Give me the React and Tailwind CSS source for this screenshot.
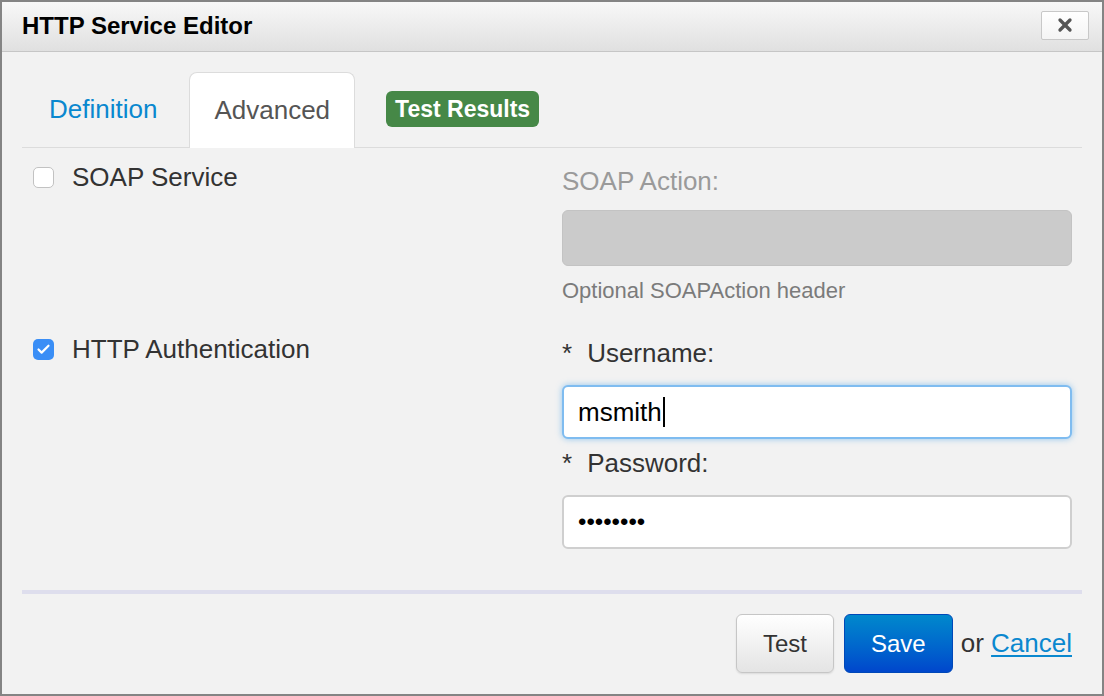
import { X, Check } from "lucide-react";

const Checkbox = ({ checked }) =>
  checked ? (
    <span className="flex items-center justify-center w-[21px] h-[21px] rounded-[5px] bg-[#3a8ef6]">
      <Check className="w-[15px] h-[15px] text-white" strokeWidth={3.5} />
    </span>
  ) : (
    <span className="block w-[21px] h-[21px] rounded-[5px] bg-white border border-[#c2c2c2]" />
  );

export default function App() {
  return (
    <div className="w-[1104px] h-[696px] border-2 border-[#848484] bg-[#f2f2f2] font-['Liberation_Sans',Arial,sans-serif] text-[#333] flex flex-col">
      {/* header */}
      <div className="h-[50px] shrink-0 flex items-center justify-between pl-[20px] pr-[13px] bg-gradient-to-b from-[#f8f8f8] to-[#e0e0e0] border-b border-[#c6c6c6]">
        <h1 className="text-[24px] font-bold text-black leading-none -mt-[2px]">HTTP Service Editor</h1>
        <button className="w-[48px] h-[29px] -mt-[3px] flex items-center justify-center bg-gradient-to-b from-white to-[#f4f4f4] border border-[#c8c8c8] rounded-[2px]">
          <X className="w-[20px] h-[20px] text-[#555]" strokeWidth={4} />
        </button>
      </div>

      <div className="flex-1 px-[20px] pt-[20px]">
        {/* tabs */}
        <div className="flex items-end gap-2 pl-[3px] border-b border-[#dcdcdc] h-[76px]">
          <div className="h-[76px] flex items-center px-[24px] text-[26px] text-[#0a88cf]">Definition</div>
          <div className="h-[76px] -mb-px flex items-center px-[24px] text-[26px] text-[#555] bg-white border border-b-0 border-[#dcdcdc] rounded-t-[8px]">
            Advanced
          </div>
          <div className="h-[76px] flex items-center px-[23px]">
            <span className="px-[9px] h-[36px] flex items-center rounded-[6px] bg-[#468847] text-white text-[23px] font-bold">
              Test Results
            </span>
          </div>
        </div>

        {/* form */}
        <div className="grid grid-cols-[540px_1fr] pt-[15px]">
          <label className="flex items-center gap-[18px] pl-[11px] h-[36px] -mt-[4px] text-[26px]">
            <Checkbox checked={false} />
            SOAP Service
          </label>
          <div className="flex flex-col">
            <span className="h-[36px] leading-[36px] text-[26px] text-[#9a9a9a]">SOAP Action:</span>
            <div className="mt-[11px] w-[510px] h-[56px] rounded-[6px] bg-[#cbcbcb] border border-[#c3c3c3]" />
            <span className="mt-[10px] h-[30px] leading-[30px] text-[22px] text-[#7b7b7b]">Optional SOAPAction header</span>
          </div>

          <label className="flex items-center gap-[18px] pl-[11px] h-[36px] mt-[25px] text-[26px]">
            <Checkbox checked />
            HTTP Authentication
          </label>
          <div className="flex flex-col mt-[29px]">
            <span className="h-[36px] leading-[36px] text-[26px]">
              <span className="mr-[15px]">*</span>Username:
            </span>
            <div className="mt-[14px] w-[510px] h-[54px] flex items-center px-[14px] bg-white rounded-[6px] border-2 border-[#7fbcf0] shadow-[0_0_6px_rgba(82,168,236,0.6)] text-[26px] text-black">
              msmith
              <span className="w-[2px] h-[30px] bg-black ml-px" />
            </div>
            <span className="mt-[6px] h-[36px] leading-[36px] text-[26px]">
              <span className="mr-[15px]">*</span>Password:
            </span>
            <input
              type="password"
              readOnly
              defaultValue="secret12"
              className="mt-[14px] w-[510px] h-[54px] px-[14px] bg-white rounded-[6px] border-2 border-[#cfcfcf] text-[24px] text-black outline-none"
            />
          </div>
        </div>

        <div className="mt-[41px] h-[4px] bg-[#dedeed]" />

        {/* footer buttons */}
        <div className="flex items-center justify-end gap-[10px] pr-[10px] mt-[20px]">
          <button className="h-[59px] px-[26px] text-[24px] text-[#333] rounded-[6px] border border-[#c6c6c6] bg-gradient-to-b from-white to-[#e4e4e4] shadow-[0_1px_2px_rgba(0,0,0,0.1)]">
            Test
          </button>
          <button className="h-[59px] px-[26px] text-[24px] text-white rounded-[6px] border border-[#0048b8] bg-gradient-to-b from-[#0088cc] to-[#0046cc]">
            Save
          </button>
          <span className="-ml-[2px] text-[26px] text-[#333]">
            or{" "}
            <a href="#" className="text-[#0a88cf] underline underline-offset-[3px]">
              Cancel
            </a>
          </span>
        </div>
      </div>
    </div>
  );
}
